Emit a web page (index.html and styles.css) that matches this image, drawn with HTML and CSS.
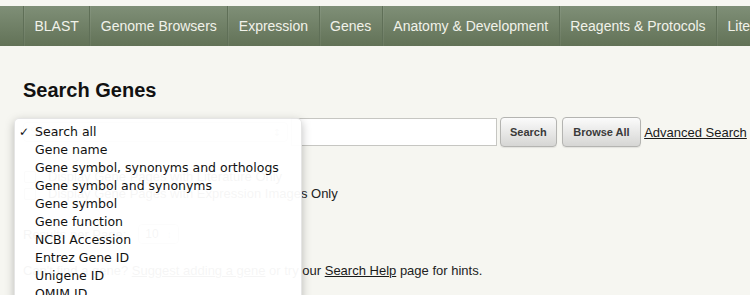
FILE: index.html
```html
<!DOCTYPE html>
<html>
<head>
<meta charset="utf-8">
<link rel="stylesheet" href="styles.css">
</head>
<body>
<div class="topstrip"></div>
<nav class="nav">
  <a class="nav-item">BLAST</a><a class="nav-item">Genome Browsers</a><a class="nav-item">Expression</a><a class="nav-item">Genes</a><a class="nav-item">Anatomy &amp; Development</a><a class="nav-item">Reagents &amp; Protocols</a><a class="nav-item">Literature</a><a class="nav-item">Community</a>
</nav>
<main class="main">
  <h1 class="title">Search Genes</h1>
  <div class="form-row">
    <div class="fake-select"><span>Search all</span><span class="arrows">&#x2195;</span></div>
    <div class="search-input"></div>
    <button class="btn btn-search">Search</button>
    <button class="btn btn-browse">Browse All</button>
    <a class="adv-link">Advanced Search</a>
    <div class="menu">
      <div class="menu-item checked"><span class="check">&#x2713;</span>Search all</div>
      <div class="menu-item">Gene name</div>
      <div class="menu-item">Gene symbol, synonyms and orthologs</div>
      <div class="menu-item">Gene symbol and synonyms</div>
      <div class="menu-item">Gene symbol</div>
      <div class="menu-item">Gene function</div>
      <div class="menu-item">NCBI Accession</div>
      <div class="menu-item">Entrez Gene ID</div>
      <div class="menu-item">Unigene ID</div>
      <div class="menu-item">OMIM ID</div>
      <div class="menu-item">Xenbase ID</div>
    </div>
  </div>
  <div class="options">
    <div class="opt"><span class="cb"></span>Display Gene Pages with Literature Only</div>
    <div class="opt"><span class="cb"></span>Display Gene Pages with Expression Images Only</div>
  </div>
  <div class="results-row">Results per Page: <span class="small-select">10 <span class="arrows">&#x2195;</span></span></div>
  <p class="hint">Can't find a gene? <a class="link">Suggest adding a gene</a> or try our <a class="link">Search Help</a> page for hints.</p>
</main>
</body>
</html>
```

FILE: styles.css
```css
html, body {
  margin: 0;
  padding: 0;
  overflow: hidden;
}
body {
  background: #f6f6f1;
  font-family: "Liberation Sans", Arial, sans-serif;
  color: #222;
  width: 750px;
  height: 295px;
}
.topstrip {
  height: 6px;
}
.nav {
  height: 40px;
  display: flex;
  align-items: stretch;
  padding-left: 23px;
  background: linear-gradient(#7f8f77, #627257);
  white-space: nowrap;
  overflow: hidden;
}
.nav-item {
  display: flex;
  align-items: center;
  flex: none;
  padding: 0 10.5px;
  border-left: 1px solid #5f6f57;
  box-shadow: inset 1px 0 0 rgba(255,255,255,0.06);
  color: #f1f2ea;
  font-size: 14px;
  text-decoration: none;
}
.main {
  padding-left: 23px;
}
.title {
  margin: 33px 0 0;
  font-size: 20px;
  line-height: 23px;
  font-weight: bold;
  color: #111;
}
.form-row {
  position: relative;
  display: flex;
  align-items: center;
  height: 30px;
  margin-top: 15px;
}
.fake-select {
  width: 265px;
  height: 20px;
  margin-right: 3px;
  border: 1px solid #c9c9c4;
  border-radius: 4px;
  background: #fdfdfb;
  display: flex;
  align-items: center;
  justify-content: space-between;
  padding: 0 6px;
  box-sizing: border-box;
  font-family: "DejaVu Sans", sans-serif;
  font-size: 12px;
  color: #aaa;
}
.arrows {
  font-size: 10px;
  color: #999;
}
.search-input {
  width: 206px;
  height: 28px;
  box-sizing: border-box;
  border: 1px solid #c6c6c2;
  background: #fff;
  margin-right: 3px;
}
.btn {
  height: 30px;
  padding: 0 9px;
  border: 1px solid #b4b4b1;
  border-radius: 4px;
  background: linear-gradient(#fbfbfb, #d6d6d4);
  box-shadow: 0 1px 1px rgba(0,0,0,0.08);
  font-family: "Liberation Sans", Arial, sans-serif;
  font-size: 11px;
  font-weight: bold;
  color: #3a3a3a;
}
.btn-search {
  margin-right: 5px;
}
.btn-browse {
  padding: 0 10.5px;
  margin-right: 3px;
}
.adv-link {
  font-size: 13px;
  color: #1a1a1a;
  text-decoration: underline;
  white-space: nowrap;
}
.menu {
  position: absolute;
  left: -9px;
  top: 1px;
  width: 288px;
  padding-top: 4px;
  box-sizing: border-box;
  background: rgba(255,255,255,0.955);
  border: 1px solid rgba(0,0,0,0.1);
  border-radius: 5px;
  box-shadow: 0 3px 10px rgba(0,0,0,0.25);
  font-family: "DejaVu Sans", sans-serif;
  font-size: 12.5px;
  color: #111;
  z-index: 5;
}
.menu-item {
  position: relative;
  height: 18px;
  line-height: 18px;
  padding-left: 20px;
  white-space: nowrap;
}
.check {
  position: absolute;
  left: 4px;
  top: 0;
  font-size: 12px;
  font-weight: bold;
}
.options {
  margin-top: 21px;
}
.opt {
  display: flex;
  align-items: center;
  height: 17px;
  font-size: 13px;
  line-height: 17px;
}
.cb {
  width: 12px;
  height: 12px;
  box-sizing: border-box;
  border: 1px solid #999;
  border-radius: 2px;
  background: #fff;
  margin: 0 12px 0 1px;
}
.results-row {
  margin-top: 21px;
  height: 22px;
  display: flex;
  align-items: center;
  font-size: 13px;
}
.small-select {
  margin-left: 12px;
  display: inline-flex;
  align-items: center;
  gap: 8px;
  height: 18px;
  padding: 0 6px;
  border: 1px solid #bbb;
  border-radius: 4px;
  background: #fff;
  font-size: 12px;
}
.hint {
  margin: 17px 0 0;
  font-size: 13px;
  line-height: 17px;
}
.link {
  color: #1a1a1a;
  text-decoration: underline;
}
```
